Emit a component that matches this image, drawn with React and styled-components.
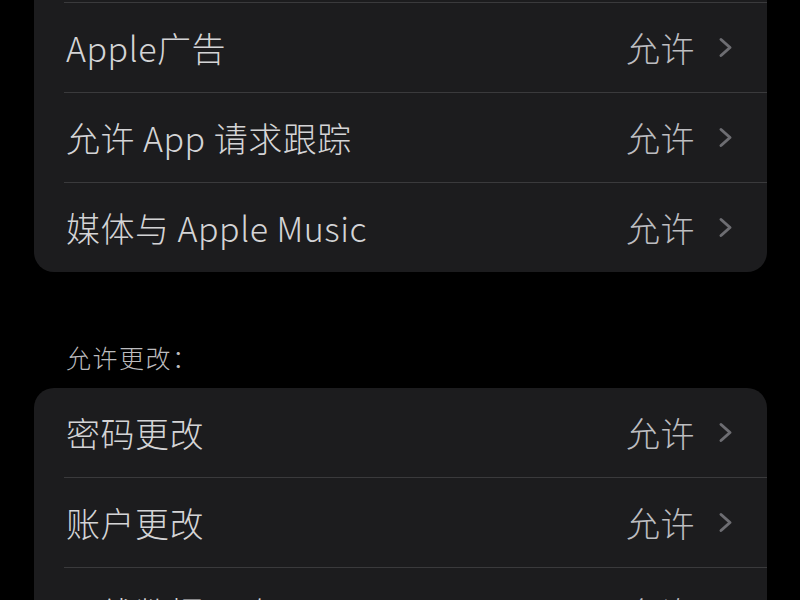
import React from "react";
import styled, { createGlobalStyle } from "styled-components";

const Global = createGlobalStyle`
  html, body { margin: 0; padding: 0; background: #000; }
  body {
    font-family: "Noto Sans CJK SC", "Noto Sans", "Liberation Sans", sans-serif;
    overflow: hidden;
  }
`;

const Page = styled.div`
  width: 800px;
  height: 600px;
  overflow: hidden;
  background: #000;
  padding: 0 33px 0 34px;
  box-sizing: border-box;
  display: flex;
  flex-direction: column;
`;

const Card = styled.div`
  background: #1c1c1e;
  border-radius: ${(p) => (p.$flatTop ? "0 0 20px 20px" : "20px")};
  display: flex;
  flex-direction: column;
  flex-shrink: 0;
`;

const TopEdge = styled.div`
  height: 2px;
  flex-shrink: 0;
`;

const Row = styled.div`
  height: 89px;
  display: flex;
  align-items: center;
  padding: 0 34px 0 32px;
  box-sizing: border-box;
  flex-shrink: 0;
`;

const Separator = styled.div`
  height: 1px;
  margin-left: 30px;
  background: #3a3a3c;
  flex-shrink: 0;
`;

const Label = styled.span`
  flex: 1;
  font-size: 34px;
  font-weight: 300;
  color: #d4d4d6;
  letter-spacing: 0.5px;
  white-space: nowrap;
`;

const Value = styled.span`
  font-size: 34px;
  font-weight: 300;
  color: #bdbdc0;
  letter-spacing: 0.5px;
  margin-right: 23px;
`;

const SectionHeader = styled.div`
  margin: 70px 0 16px 32px;
  font-size: 25px;
  font-weight: 300;
  line-height: 30px;
  color: #bcbcbf;
  letter-spacing: 1.5px;
`;

const Chevron = () => (
  <svg width="15" height="21" viewBox="0 0 15 21" fill="none">
    <polyline
      points="3,2.5 12,10.5 3,18.5"
      stroke="#6d6d72"
      strokeWidth="3"
      strokeLinecap="round"
      strokeLinejoin="round"
    />
  </svg>
);

const Item = ({ label, value, last }) => (
  <>
    <Row>
      <Label>{label}</Label>
      <Value>{value}</Value>
      <Chevron />
    </Row>
    {!last && <Separator />}
  </>
);

export default function App() {
  return (
    <>
      <Global />
      <Page>
        <Card $flatTop>
          <TopEdge />
          <Separator />
          <Item label="Apple广告" value="允许" />
          <Item label="允许 App 请求跟踪" value="允许" />
          <Item label="媒体与 Apple Music" value="允许" last />
        </Card>
        <SectionHeader>允许更改：</SectionHeader>
        <Card>
          <Item label="密码更改" value="允许" />
          <Item label="账户更改" value="允许" />
          <Item label="无线数据更改" value="允许" last />
        </Card>
      </Page>
    </>
  );
}
